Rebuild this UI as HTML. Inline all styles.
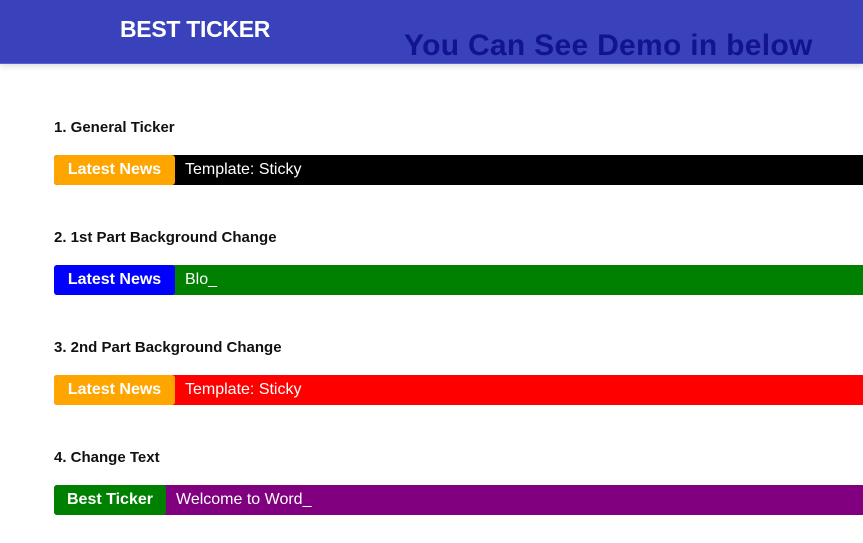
<!DOCTYPE html>
<html><head><style>
body{margin:0;width:863px;height:543px;overflow:hidden;background:#fff;font-family:"Liberation Sans",sans-serif;position:relative}
.hdr{position:absolute;left:0;top:0;width:863px;height:63px;background:#3941bb;box-shadow:0 2px 6px rgba(0,0,0,.15);border-bottom:1px solid #5a62d0}
.t1{position:absolute;left:120px;top:16px;color:#fff;font-weight:bold;font-size:23px;letter-spacing:-0.3px}
.t2{position:absolute;left:404px;top:29px;color:#12148f;font-weight:bold;font-size:30px;letter-spacing:0.3px;white-space:nowrap}
h4{position:absolute;left:54px;margin:0;font-size:15px;font-weight:bold;color:#111}
.tk{position:absolute;left:54px;width:809px;height:30px;border-radius:3px 0 0 3px;overflow:hidden;display:flex;font-size:16px;line-height:30px}
.lb{color:#fff;font-weight:bold;text-align:center;border-radius:3px}
.ct{color:#fff;padding-left:10px;flex:1}
</style></head><body>
<div class="hdr"><div class="t1">BEST TICKER</div><div class="t2">You Can See Demo in below</div></div>
<h4 style="top:119px">1. General Ticker</h4>
<div class="tk" style="top:155px;background:#000"><div class="lb" style="width:121px;background:#ffa500">Latest News</div><div class="ct">Template: Sticky</div></div>
<h4 style="top:229px">2. 1st Part Background Change</h4>
<div class="tk" style="top:265px;background:#008000"><div class="lb" style="width:121px;background:#0000ff">Latest News</div><div class="ct">Blo_</div></div>
<h4 style="top:339px">3. 2nd Part Background Change</h4>
<div class="tk" style="top:375px;background:#ff0000"><div class="lb" style="width:121px;background:#ffa500">Latest News</div><div class="ct">Template: Sticky</div></div>
<h4 style="top:449px">4. Change Text</h4>
<div class="tk" style="top:485px;background:#800080"><div class="lb" style="width:112px;background:#008000">Best Ticker</div><div class="ct">Welcome to Word_</div></div>
</body></html>
